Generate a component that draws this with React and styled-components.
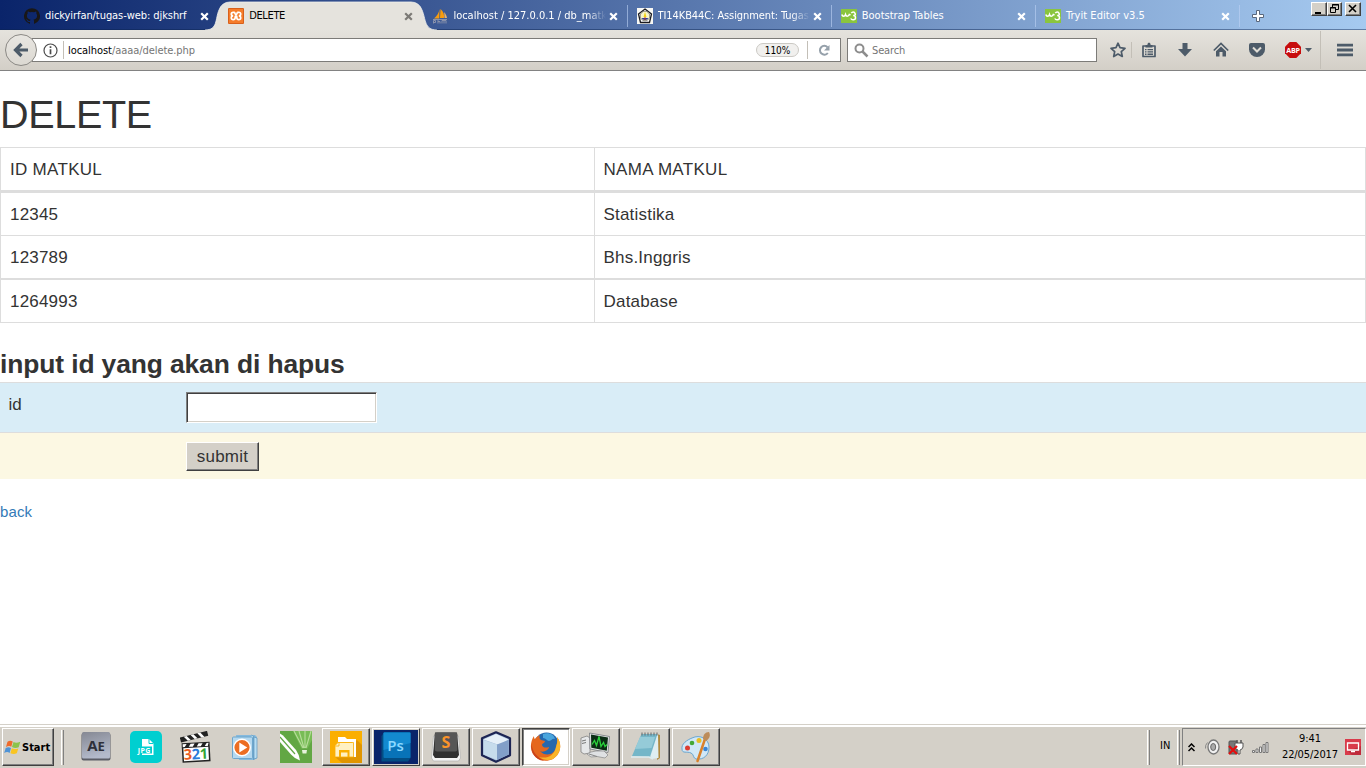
import React from "react";
import styled, { createGlobalStyle, css } from "styled-components";

const GlobalStyle = createGlobalStyle`
  * { box-sizing: border-box; }
  html, body, #root { margin: 0; height: 768px; overflow: hidden; }
  body { background: #fff; }
`;

const uiFont = css`
  font-family: "DejaVu Sans Condensed", "DejaVu Sans", sans-serif;
  font-stretch: condensed;
  font-size: 11px;
`;

const Screen = styled.div`
  display: flex;
  flex-direction: column;
  width: 1366px;
  height: 768px;
  overflow: hidden;
  background: #fff;
`;

/* ---------- browser chrome ---------- */

const TabBar = styled.div`
  flex: none;
  display: flex;
  height: 30px;
  padding-left: 15px;
  background: linear-gradient(to right, #0a246a 0, #a6caf0 100%);
  box-shadow: inset 0 -1px 0 rgba(10, 36, 80, 0.45);
`;

const TabBox = styled.div`
  position: relative;
  flex: none;
  display: flex;
  align-items: center;
  width: 204.2px;
  height: 30px;
  padding: 2px 8px 0 9px;
  ${uiFont}
  color: ${(p) => (p.$active ? "#000" : "#fff")};
  &::after {
    content: "";
    position: absolute;
    right: 0;
    top: 5px;
    width: 1px;
    height: 22px;
    background: ${(p) => (p.$line ? "rgba(190,210,245,0.6)" : "transparent")};
  }
`;

const TabShape = styled.svg`
  position: absolute;
  left: -14px;
  top: 0;
`;

const Favicon = styled.svg`
  position: relative;
  flex: none;
  width: 16px;
  height: 16px;
  margin-right: 5px;
`;

const TabTitle = styled.span`
  position: relative;
  flex: 1;
  min-width: 0;
  white-space: nowrap;
  line-height: 16px;
  letter-spacing: ${(p) => p.$ls || 0}px;
  ${(p) =>
    p.$fade &&
    css`
      mask-image: linear-gradient(to right, #000 88%, transparent 100%);
    `}
`;

const CloseGlyph = styled.svg`
  position: relative;
  flex: none;
  width: 9px;
  height: 9px;
  margin: 0 2px 0 3px;
`;

const NewTab = styled.svg`
  width: 14px;
  height: 14px;
  margin: 9px 0 0 11px;
`;

const WindowButtons = styled.div`
  display: flex;
  margin: 2px 5px 0 auto;
`;

const WindowButton = styled.div`
  width: ${(p) => p.$w || 16}px;
  height: 14px;
  margin-left: ${(p) => p.$ml || 0}px;
  background: #d4d0c8;
  border: 1px solid;
  border-color: #fff #404040 #404040 #fff;
  box-shadow: inset -1px -1px 0 #808080;
  svg { display: block; }
`;

const Toolbar = styled.div`
  flex: none;
  display: flex;
  align-items: center;
  height: 41px;
  padding-left: 5px;
  background: linear-gradient(#e5e3dd, #d3cfc7);
  border-bottom: 1px solid #828282;
`;

const BackButton = styled.div`
  position: relative;
  z-index: 1;
  display: flex;
  align-items: center;
  justify-content: center;
  width: 32px;
  height: 32px;
  border: 1px solid #8b8985;
  border-radius: 50%;
  background: linear-gradient(#e8e6e1, #dcd9d2);
`;

const Field = styled.div`
  display: flex;
  align-items: center;
  width: ${(p) => p.$w}px;
  height: 24px;
  margin-left: ${(p) => p.$ml}px;
  padding-left: ${(p) => p.$pl}px;
  background: #fff;
  border: 1px solid #7c7b78;
  ${uiFont}
  color: #757575;
  svg { flex: none; }
`;

const Address = styled.span`
  flex: 1;
  padding: 1px 0 0 4px;
  line-height: 16px;
  letter-spacing: -0.06px;
  b { font-weight: 400; color: #000; }
`;

const Rule = styled.i`
  flex: none;
  width: 1px;
  height: ${(p) => p.$h}px;
  margin: 0 ${(p) => p.$mr || 0}px 0 ${(p) => p.$ml || 0}px;
  background: #c3bfb7;
`;

const ZoomPill = styled.span`
  width: 43px;
  height: 14px;
  border: 1px solid #cbc9c4;
  border-radius: 7px;
  background: #f1f0ee;
  color: #000;
  font-size: 10px;
  line-height: 13px;
  text-align: center;
  letter-spacing: -0.1px;
`;

const SearchHint = styled.span`
  padding: 1px 0 0 3px;
  line-height: 16px;
  letter-spacing: -0.15px;
`;

const ToolIcon = styled.svg`
  flex: none;
  width: 16px;
  height: 16px;
  margin-left: ${(p) => p.$ml}px;
`;

/* ---------- page ---------- */

const Page = styled.main`
  flex: 1;
  min-height: 0;
  font-family: "Liberation Sans", Arial, sans-serif;
  font-size: 17px;
  color: #333;
`;

const Title = styled.h1`
  margin: 0;
  padding-top: 21px;
  height: 76px;
  font-size: 39.6px;
  font-weight: 400;
  line-height: 44px;
  letter-spacing: -0.35px;
`;

const Courses = styled.div`
  border: 1px solid #ddd;
`;

const CourseRow = styled.div`
  display: grid;
  grid-template-columns: 594px 1fr;
  height: ${(p) => p.$h}px;
  border-bottom: ${(p) => p.$line}px solid #ddd;
`;

const Cell = styled.div`
  padding: 12px 9px 0;
  line-height: 20px;
  letter-spacing: ${(p) => p.$ls || 0.2}px;
  & + & { padding-left: 8.5px; }
  &:first-child { border-right: 1px solid #ddd; }
`;

const FormTitle = styled.h3`
  margin: 0;
  height: 59px;
  padding-top: 26px;
  font-size: 26.4px;
  font-weight: 700;
  line-height: 30px;
  letter-spacing: -0.11px;
`;

const FormRow = styled.div`
  display: grid;
  grid-template-columns: 186px 1fr;
  height: ${(p) => p.$h}px;
  border-top: 1px solid #ddd;
  padding-top: 9px;
  background: ${(p) => p.$bg};
`;

const FormLabel = styled.label`
  padding: 3px 0 0 8.5px;
  line-height: 20px;
`;

const IdInput = styled.input`
  width: 191px;
  height: 31px;
  padding: 1px 4px;
  border: 1px solid;
  border-color: #808080 #fff #fff #808080;
  border-radius: 0;
  box-shadow: inset 1px 1px 0 #404040, inset -1px -1px 0 #d4d0c8;
  background: #fff;
  outline: none;
`;

const Submit = styled.button`
  width: 73px;
  height: 29px;
  padding: 0;
  border: 1px solid;
  border-color: #fff #404040 #404040 #fff;
  box-shadow: inset -1px -1px 0 #808080;
  background: #d4d0c8;
  color: #333;
  font: 17px/25px "Liberation Sans", Arial, sans-serif;
  letter-spacing: 0.25px;
`;

const BackLink = styled.a`
  display: block;
  margin-top: 23px;
  color: #337ab7;
  font-size: 15px;
  line-height: 20px;
  letter-spacing: 0.1px;
`;

/* ---------- taskbar ---------- */

const Taskbar = styled.footer`
  flex: none;
  display: flex;
  height: 44px;
  padding: 1px 0 0 2px;
  background: #d4d0c8;
  border-top: 1px solid #d4d0c8;
  box-shadow: inset 0 2px 0 #fff;
  ${uiFont}
  color: #000;
`;

const raised = css`
  border: 1px solid;
  border-color: #fff #404040 #404040 #fff;
  box-shadow: inset -1px -1px 0 #808080;
`;

const StartButton = styled.div`
  display: flex;
  align-items: center;
  width: 52px;
  height: 38px;
  margin-top: 2px;
  padding-left: 1px;
  font-weight: 700;
  letter-spacing: 0;
  ${raised}
  svg { margin-right: 1px; }
`;

const Grip = styled.i`
  width: 3px;
  height: 35px;
  margin: 4px ${(p) => p.$mr}px 0 ${(p) => p.$ml}px;
  border-left: 1px solid #fff;
  border-right: 1px solid #808080;
`;

const Apps = styled.div`
  display: flex;
  gap: 2px;
  margin-top: 2px;
`;

const AppButton = styled.div`
  display: flex;
  align-items: center;
  justify-content: center;
  width: 48px;
  height: 38px;
  ${(p) => p.$state && raised}
  ${(p) =>
    p.$state === "alert" &&
    css`
      background: #0a246a;
      box-shadow: inset 0 0 0 1px #d4d0c8, inset -1px -1px 0 #808080;
    `}
  ${(p) =>
    p.$state === "down" &&
    css`
      background: #fff;
      border-color: #404040 #fff #fff #404040;
      box-shadow: inset 1px 1px 0 #808080, inset -1px -1px 0 #d4d0c8;
    `}
`;

const Language = styled.span`
  width: 17px;
  padding-top: 13px;
  line-height: 14px;
`;

const Tray = styled.div`
  display: flex;
  align-items: center;
  width: 184px;
  height: 38px;
  margin-top: 2px;
  border: 1px solid;
  border-color: #808080 #fff #fff #808080;
`;

const TrayIcon = styled.svg`
  flex: none;
  margin-left: ${(p) => p.$ml}px;
`;

const Clock = styled.div`
  width: 66px;
  margin-left: 8px;
  line-height: 16px;
  text-align: center;
  letter-spacing: -0.1px;
  white-space: nowrap;
`;

/* ---------- drawings ---------- */

const IconText = styled.text`
  font-family: "Open Sans", sans-serif;
  font-stretch: normal;
  font-weight: ${(p) => p.$weight || 700};
  letter-spacing: ${(p) => p.$ls || 0}px;
`;

const GithubIcon = () => (
  <Favicon viewBox="0 0 16 16">
    <path fill="#191717" d="M8 .2a8 8 0 0 0-2.5 15.6c.4.1.5-.2.5-.4v-1.5c-2.2.5-2.7-1-2.700-1-.4-.9-.9-1.200-.9-1.200-.7-.5.1-.5.1-.5.8.1 1.200.8 1.200.8.7 1.300 1.900.9 2.400.7 0-.5.3-.9.5-1.100-1.800-.2-3.700-.9-3.700-4 0-.9.3-1.600.8-2.100 0-.2-.3-1 .1-2.100 0 0 .7-.2 2.200.8a7.500 7.500 0 0 1 4 0c1.500-1 2.200-.8 2.200-.8.4 1.100.1 1.900.1 2.100.5.5.8 1.200.8 2.100 0 3.100-1.900 3.800-3.700 4 .3.2.6.7.6 1.400v2.400c0 .2.1.5.5.4A8 8 0 0 0 8 .2z" />
  </Favicon>
);
const XamppIcon = () => (
  <Favicon viewBox="0 0 16 16">
    <rect width="16" height="16" rx="1" fill="#d9601a" />
    <rect x="1" y="1" width="14" height="14" fill="#f57c2a" />
    <g fill="none" stroke="#fff" strokeWidth="1.700">
      <path d="M6.800 4.300H5.200Q3.300 4.300 3.300 6.100T5.200 7.900Q3.300 7.900 3.300 9.800T5.200 11.700Q7.200 11.700 7.200 9.500V8.800Q7.200 7.900 8 7.900T8.800 8.800V9.500Q8.800 11.700 10.800 11.700T12.700 9.800 10.800 7.900Q12.700 7.900 12.700 6.100T10.800 4.300H9.200" />
      <path d="M6.800 4.300Q6.900 6.500 8 6.500T9.200 4.300" />
    </g>
  </Favicon>
);
const PmaIcon = () => (
  <Favicon viewBox="0 0 16 16">
    <path d="M7.500 1C7 5 5 8 2 10.500h5.300zM8.500 1c3 2.500 4 6 3.500 9H8z" fill="#f89c0e" />
    <path d="M12.200 4c1.500 1.800 2.500 4 2.800 6h-2.500z" fill="#e9b36c" />
    <path d="M1 11.500h14M1.500 15.500v-3h2v2h-2M6 12v3.500m0-2h2v2M10 15.500v-3h2v3m0-3h2v3" stroke="#8a93ac" strokeWidth="1" fill="none" />
  </Favicon>
);
const CampusIcon = () => (
  <Favicon viewBox="0 0 16 16">
    <rect width="16" height="16" fill="#f8f8f4" />
    <path d="M8 1l6.500 5-2 8.500h-9l-2-8.500z" fill="#fff" stroke="#1b1c20" strokeWidth="1.300" />
    <circle cx="8" cy="8" r="4.800" fill="#f7f6c8" stroke="#444" strokeWidth=".6" />
    <path d="M8 4l1.500 5h-3z" fill="#f2d312" />
    <path d="M4.700 10h6.600c-.8 2.500-5.800 2.500-6.600 0z" fill="#263b9b" />
    <path d="M7.500 9h1v3h-1z" fill="#c13a2e" />
  </Favicon>
);
const W3Icon = () => (
  <Favicon viewBox="0 0 16 16">
    <rect y="1" width="16" height="14" fill="#8ac53e" />
    <path d="M.8 6.500Q1.300 8.200 2.600 8.200T4.500 6.500Q5 8.200 6.300 8.200T8.300 6.500L9.500 7M10.300 5.200Q11 4 12.300 4T14.200 5.700 12.200 7.600Q14.500 7.700 14.500 9.700T12.300 11.800 10.200 10.400" fill="none" stroke="#fff" strokeWidth="1.500" />
  </Favicon>
);

const Close = ({ color }) => (
  <CloseGlyph viewBox="0 0 9 9">
    <path d="M1.200 1.200l6.600 6.600M7.800 1.200L1.200 7.800" stroke={color} strokeWidth="2.200" />
  </CloseGlyph>
);

const slate = "#4d5b69";

const StartFlag = () => (
  <svg width="17" height="15" viewBox="0 0 17 15">
    <path d="M3.500 1.700c2-1.200 3.600-1.100 5.200-.1L7.300 6.700c-1.600-1-3.200-.9-5.300.2z" fill="#ef6a2b" />
    <path d="M9.500 2c1.800 1 3.800 1 6.800-.2l-1.600 5.400c-2.300 1-4.400.9-6.700-.2z" fill="#8cc34b" />
    <path d="M1.700 7.900c2-1 3.600-1 5.300.1l-1.400 4.900c-1.700-1.100-3.400-1-5.400.1z" fill="#4f93d6" />
    <path d="M7.800 8.300c2.100 1 4.200 1 6.500.1l-1.500 4.900c-2.200 1-4.400.9-6.400-.1z" fill="#f9c522" />
  </svg>
);

const Icon32 = ({ children }) => (
  <svg width="32" height="32" viewBox="0 0 32 32">{children}</svg>
);

const AfterEffects = () => (
  <Icon32>
    <defs><linearGradient id="ae" x2="0.300" y2="1"><stop stopColor="#858893" /><stop offset="1" stopColor="#b3bacb" /></linearGradient></defs>
    <rect x="1.500" y="2" width="29" height="27.500" rx="2" fill="#5b5d66" />
    <rect x="2" y="1" width="28" height="26.500" rx="1.500" fill="url(#ae)" />
    <IconText x="16" y="19.500" fontSize="15" textAnchor="middle" fill="#2e3039">A<tspan fontSize="13">E</tspan></IconText>
  </Icon32>
);
const JpgConverter = () => (
  <Icon32>
    <rect width="32" height="32" rx="5" fill="#00cfd0" />
    <path d="M12 8h7l4.500 4.500V24H12z" fill="#fff" />
    <path d="M19 8v4.500h4.500" fill="none" stroke="#00cfd0" />
    <path d="M6 15.500h16v7H6z" fill="#00cfd0" />
    <IconText x="14.200" y="22" fontSize="7" textAnchor="middle" fill="#fff" $ls={0.3}>JPG</IconText>
  </Icon32>
);
const Clapper = () => (
  <Icon32>
    <g transform="rotate(-14 3 11)">
      <rect x="1" y="6" width="28" height="5" fill="#222" />
      <path d="M5 6l3 5h3L8 6zM12 6l3 5h3l-3-5zM19 6l3 5h3l-3-5z" fill="#fff" />
    </g>
    <g transform="rotate(-3 16 20)">
      <rect x="2" y="11.500" width="28" height="19.500" fill="#222" />
      <path d="M3 12.500h4l-2 3H3zM11 12.500h4l-2 3H9zM19 12.500h4l-2 3h-4zM27 12.500h2l-1 3h-3zM3.500 16.500h25v13h-25z" fill="#fff" />
      <IconText x="3.600" y="28.200" fontSize="14.500" fill="#eb5c20" $ls={-0.3}>3<tspan fill="#2b7cdb">2</tspan><tspan fill="#35a536">1</tspan></IconText>
    </g>
  </Icon32>
);
const MediaPlayer = () => (
  <Icon32>
    <path d="M6 4h19l2 2v21l-3 2H9z" fill="#86b9dd" />
    <path d="M24 6l3 1v20l-3 1zM21 4l2.500 1v24" fill="#b8def3" stroke="#5d96bf" strokeWidth=".7" />
    <rect x="2.500" y="6" width="20" height="21.500" rx="1" fill="#b5d8ef" stroke="#6da6cd" />
    <circle cx="12" cy="16.500" r="8.300" fill="#ec6d22" stroke="#fff" strokeWidth="1.400" />
    <path d="M9.300 11.500l8 5-8 5z" fill="#fff" />
  </Icon32>
);
const Corel = () => (
  <Icon32>
    <rect width="32" height="32" fill="#62a744" />
    <path d="M13 0l8.500 17.500h6L32 9V0z" fill="#78bc56" />
    <path d="M14 0l9 17M19 0l5 17M25 0v17M31 0l-5 17" stroke="#b8dd9c" strokeWidth="1.100" />
    <path d="M0 2.500V11l11 12.500Q15 28 20 29.500 19.500 24 16 19L3 4.500z" fill="#fff" />
    <path d="M0 6l15 17" stroke="#62a744" strokeWidth="1.200" />
    <path d="M22 19h5l-.6 3.500h-3.800z" fill="#e6f2dc" />
  </Icon32>
);
const Explorer = () => (
  <Icon32>
    <rect width="32" height="32" fill="#fbaf00" />
    <path d="M27 9l5 5v18H12l-7-6z" fill="#e09500" />
    <path d="M8 6h7l2 2h9v18h-4V11H8z" fill="#fff" />
    <path d="M8 11.500h15.500V26H5V14.500z" fill="#fff1c2" stroke="#fbaf00" strokeWidth=".8" />
    <path d="M5.400 15H9v-3.500" fill="none" stroke="#fbaf00" strokeWidth=".8" />
    <path d="M9 26v-7h10.500v7h-2v-4.500H11V26z" fill="#fbaf00" />
  </Icon32>
);
const Photoshop = () => (
  <Icon32>
    <path d="M1.500 5l3-4H30l.5 26-2.500 3.500H1.500z" fill="#034d83" />
    <rect x="3.500" y="1" width="27" height="26" rx="1" fill="#0873b8" />
    <path d="M3.500 2h27v10l-27 7z" fill="#138ad0" />
    <IconText x="15.500" y="19.500" fontSize="15" textAnchor="middle" fill="#8dd9ff" $weight={600}>Ps</IconText>
  </Icon32>
);
const Sublime = () => (
  <Icon32>
    <path d="M3.500 5h25l2 22-2 3h-25l-2-3z" fill="#f4f4f4" stroke="#aaa" strokeWidth=".6" />
    <path d="M5 1.500h22L29 24l-2 3H5l-2-3z" fill="#303030" />
    <rect x="4.800" y="1.500" width="22.500" height="19" rx="2" fill="#565656" />
    <IconText x="16" y="16.500" fontSize="16" textAnchor="middle" fill="#fb9429">S</IconText>
  </Icon32>
);
const VirtualBox = () => (
  <Icon32>
    <path d="M16 1.300l14 6v17l-14 6.500-14-6.500v-17z" fill="#a5bdd9" stroke="#1d2554" strokeWidth="2.200" strokeLinejoin="round" />
    <path d="M16 3l12.500 5.500L19 14 3.500 8.500z" fill="#e6f0f8" />
    <path d="M3.500 9L17 13.500V29L3.500 23.500z" fill="#c6dcec" />
    <path d="M28.500 9L17 13.500V29l11.500-5.500z" fill="#829fc8" />
  </Icon32>
);
const Firefox = () => (
  <Icon32>
    <circle cx="16.500" cy="14" r="12.500" fill="#2668ad" />
    <path d="M13 3c5-2 11 0 12 5-3-1-3 2-6 2-2 0-3-3-6-3z" fill="#49a5dd" />
    <path d="M27 6c6 8 3 18-4 22C13 33 2 27 1 17 .5 12 2 8 4 5c0 2 .5 3 1 3 1-2 3-3 5-4-1 2-.5 4 1 5l4 1c0 2-3 2.500-3 4 1 3 4 3 7 2 0 3-6 6-9 4 5 6 15 4 16-4 .5-3 2-5 1-10z" fill="#e5671d" />
    <path d="M27 6c6 8 3 18-4 22-5 2-10 1-14-2 8 2 15-1 17-10 .5-3 2-5 1-10z" fill="#f8b52a" />
    <path d="M1.500 13C3 22 7 26 14 29.500 6 30 0 21 1.500 13z" fill="#c9421b" />
  </Icon32>
);
const TaskManager = () => (
  <Icon32>
    <path d="M1 7l6-2 3 2v15l-6 1-3-2z" fill="#e5e7e8" stroke="#777" strokeWidth=".7" />
    <path d="M2 10l4-1M2 12.500l4-1" stroke="#777" />
    <path d="M9.500 2l20 3.500-1.500 16-18-3.500z" fill="#e5e7e8" stroke="#74777c" strokeWidth=".8" />
    <path d="M11 3.500l17 3-1.200 13.200-15.500-3z" fill="#0a2d14" />
    <path d="M12 13.500l2.500-4 2 5 2.500-9 2 10 2.500-4 1.500 4 2-2" fill="none" stroke="#29d13b" strokeWidth="1.300" />
    <path d="M16 20h8l4 4-3 3-8-1.500-6 .5-4-3 4-2z" fill="#dfe1e3" stroke="#888" strokeWidth=".7" />
    <path d="M9 23l8 2.500" stroke="#888" />
  </Icon32>
);
const Notepad = () => (
  <Icon32>
    <path d="M27 3l3 1v23l-3 2z" fill="#ae8a42" />
    <path d="M12 3h16l.5 24-7 1z" fill="#dfeef2" />
    <path d="M11.500 3h16L20 26 2 25z" fill="#74b6c8" />
    <path d="M10 6h15l-3.500 11L5 18z" fill="#95cbd8" />
    <path d="M12 1.500v3M15 1.500v3M18 1.500v3M21 1.500v3M24 1.500v3M27 1.500v3" stroke="#666" strokeWidth="1" />
    <path d="M1 26h18l4 2" stroke="#dcecef" strokeWidth="1.500" fill="none" />
  </Icon32>
);
const Paint = () => (
  <Icon32>
    <path d="M12 7c8-4 17 1 17 9s-5 13-13 12c-3-.5-2-5-5-6-4-2-9 1-9-4C1 13 7 9 12 7z" fill="#d1e8f7" stroke="#6aa6d0" strokeWidth="1" />
    <circle cx="7.500" cy="17" r="2.500" fill="#dd3d31" />
    <circle cx="12" cy="12" r="2.300" fill="#45a836" />
    <circle cx="19" cy="9.500" r="2.500" fill="#e8bf25" />
    <circle cx="25.500" cy="18" r="2.300" fill="#3984d3" />
    <path d="M25 8L17.500 30" stroke="#d9812b" strokeWidth="2.500" strokeLinecap="round" />
    <path d="M23 8c0-4 2-7 6-7 2 4 0 7-3 9z" fill="#bd8c59" />
  </Icon32>
);

/* ---------- data ---------- */

const tabs = [
  { title: "dickyirfan/tugas-web: djkshrf", Icon: GithubIcon, ls: -0.07 },
  { title: "DELETE", Icon: XamppIcon, active: true, ls: -0.35 },
  { title: "localhost / 127.0.0.1 / db_matk", Icon: PmaIcon, line: true, fade: true, ls: 0 },
  { title: "TI14KB44C: Assignment: Tugas", Icon: CampusIcon, line: true, fade: true, ls: -0.09 },
  { title: "Bootstrap Tables", Icon: W3Icon, line: true },
  { title: "Tryit Editor v3.5", Icon: W3Icon, line: true, ls: 0.05 },
];

const rows = [
  { id: "ID MATKUL", name: "NAMA MATKUL", h: 45, line: 3, ls: 0.3 },
  { id: "12345", name: "Statistika", h: 43, line: 1 },
  { id: "123789", name: "Bhs.Inggris", h: 44, line: 2 },
  { id: "1264993", name: "Database", h: 42, line: 0 },
];

const apps = [
  { Icon: AfterEffects }, { Icon: JpgConverter }, { Icon: Clapper }, { Icon: MediaPlayer }, { Icon: Corel },
  { Icon: Explorer, state: "up" }, { Icon: Photoshop, state: "alert" }, { Icon: Sublime, state: "up" },
  { Icon: VirtualBox, state: "up" }, { Icon: Firefox, state: "down" }, { Icon: TaskManager, state: "up" },
  { Icon: Notepad, state: "up" }, { Icon: Paint, state: "up" },
];

const Browser = () => (
  <>
    <TabBar>
      {tabs.map(({ title, Icon, active, line, fade, ls }) => (
        <TabBox key={title} $active={active} $line={line}>
          {active && (
            <TabShape width="232" height="30" viewBox="0 0 232 30">
              <path d="M0 30C13 30 10 19 14 10Q17 2 25 2H206Q214 2 217 10C221 19 219 30 232 30z" fill="#e5e3dd" />
              <path d="M0 30C13 30 10 19 14 10Q17 2 25 2H206Q214 2 217 10C221 19 219 30 232 30" fill="none" stroke="#f3f2ef" strokeWidth=".8" />
            </TabShape>
          )}
          <Icon />
          <TabTitle $fade={fade} $ls={ls}>{title}</TabTitle>
          <Close color={active ? "#7c7a76" : "#fff"} />
        </TabBox>
      ))}
      <NewTab viewBox="0 0 14 14">
        <path d="M5.500 1.500h3v4h4v3h-4v4h-3v-4h-4v-3h4z" fill="#fff" stroke="#59677c" />
      </NewTab>
      <WindowButtons>
        <WindowButton><svg width="14" height="12"><path d="M3 9h6v2H3z" /></svg></WindowButton>
        <WindowButton $w={15}><svg width="13" height="12"><path d="M4.500 4V1.500h6v5H8M4 2h7M2.500 4.500h5v5h-5zM2 5h6" fill="none" stroke="#000" /></svg></WindowButton>
        <WindowButton $ml={3}><svg width="14" height="12"><path d="M3 2l7 7M10 2L3 9" stroke="#000" strokeWidth="1.600" /></svg></WindowButton>
      </WindowButtons>
    </TabBar>
    <Toolbar>
      <BackButton>
        <svg width="16" height="16" viewBox="0 0 16 16"><path d="M8.500 2L2.500 8l6 6M3 8h12" fill="none" stroke={slate} strokeWidth="3.200" /></svg>
      </BackButton>
      <Field $w={809} $ml={-5} $pl={10}>
        <svg width="15" height="15" viewBox="0 0 15 15"><circle cx="7.500" cy="7.500" r="6.500" fill="none" stroke="#4c4c4c" strokeWidth="1.200" /><path d="M7.500 3.200v1.800M7.500 6.300v5" stroke="#4c4c4c" strokeWidth="1.700" /></svg>
        <Rule $h={18} $ml={5} />
        <Address><b>localhost</b>/aaaa/delete.php</Address>
        <ZoomPill>110%</ZoomPill>
        <Rule $h={18} $ml={8} $mr={10} />
        <svg width="22" height="13" viewBox="0 0 22 13"><path d="M9.500 3.200A4.400 4.400 0 1 0 9.800 9" fill="none" stroke="#95a0aa" strokeWidth="2" /><path d="M11.500 1v5.500H6z" fill="#95a0aa" /></svg>
      </Field>
      <Field $w={250} $ml={6} $pl={6}>
        <svg width="15" height="15" viewBox="0 0 15 15"><circle cx="5.500" cy="5.500" r="4" fill="none" stroke="#8d8d8d" strokeWidth="2" /><path d="M8.500 8.500l5 5" stroke="#8d8d8d" strokeWidth="2.500" /></svg>
        <SearchHint>Search</SearchHint>
      </Field>
      <ToolIcon $ml={13} viewBox="0 0 16 16"><path d="M8 1.200l2 4.500 5 .6-3.700 3.300 1 4.900L8 12l-4.300 2.500 1-4.900L1 6.300l5-.6z" fill="none" stroke={slate} strokeWidth="1.700" strokeLinejoin="round" /></ToolIcon>
      <Rule $h={16} $ml={5} />
      <ToolIcon $ml={9} viewBox="0 0 16 16"><path d="M2 4h12v10.500H2z" fill="none" stroke={slate} strokeWidth="1.700" strokeLinejoin="round" /><path d="M4.500 3h1.800q.2-2.500 1.700-2.500T9.700 3h1.800v2.500h-7zM4 7h1.500v1.300H4zM4 9.300h1.500v1.300H4zM4 11.600h1.500v1.300H4zM6.500 7H12v1.300H6.500zM6.500 9.300H12v1.300H6.500zM6.500 11.600H12v1.300H6.500z" fill={slate} /></ToolIcon>
      <ToolIcon $ml={20} viewBox="0 0 16 16"><path d="M5.500 1h5v6H15l-7 7.500L1 7h4.500z" fill={slate} /></ToolIcon>
      <ToolIcon $ml={20} viewBox="0 0 16 16"><path d="M.8 8.500L8 1.500l7.200 7" fill="none" stroke={slate} strokeWidth="1.700" /><path d="M3 9.300l5-4.800 5 4.800v5.200H9.500V10h-3v4.500H3z" fill={slate} /></ToolIcon>
      <ToolIcon $ml={20} viewBox="0 0 16 16"><path d="M0 3q0-2 2-2h12q2 0 2 2v4.500a8 7.500 0 0 1-16 0z" fill={slate} /><path d="M4 5.500l4 4 4-4" fill="none" stroke="#e0ddd6" strokeWidth="2" /></ToolIcon>
      <ToolIcon $ml={20} viewBox="0 0 16 16"><path d="M4.700 0h6.600L16 4.700v6.600L11.300 16H4.700L0 11.300V4.700z" fill="#c70d0d" /><IconText x="8" y="10.800" fontSize="7.200" textAnchor="middle" fill="#fff" $ls={-0.2}>ABP</IconText></ToolIcon>
      <ToolIcon as="svg" $ml={4} viewBox="0 0 16 16"><path d="M0 6h7L3.500 10z" fill={slate} /></ToolIcon>
      <Rule $h={38} $ml={-1} />
      <ToolIcon $ml={16} viewBox="0 0 16 16"><path d="M0 3.200h16M0 8h16M0 12.800h16" stroke={slate} strokeWidth="2.800" /></ToolIcon>
    </Toolbar>
  </>
);

export default function App() {
  return (
    <Screen>
      <GlobalStyle />
      <Browser />
      <Page>
        <Title>DELETE</Title>
        <Courses>
          {rows.map((r) => (
            <CourseRow key={r.id} $h={r.h} $line={r.line}>
              <Cell $ls={r.ls}>{r.id}</Cell>
              <Cell $ls={r.ls}>{r.name}</Cell>
            </CourseRow>
          ))}
        </Courses>
        <FormTitle>input id yang akan di hapus</FormTitle>
        <FormRow $h={50} $bg="#d9edf7">
          <FormLabel htmlFor="course-id">id</FormLabel>
          <IdInput id="course-id" />
        </FormRow>
        <FormRow $h={47} $bg="#fcf8e3">
          <span />
          <Submit>submit</Submit>
        </FormRow>
        <BackLink>back</BackLink>
      </Page>
      <Taskbar>
        <StartButton><StartFlag />Start</StartButton>
        <Grip $ml={7} $mr={8} />
        <Apps>
          {apps.map(({ Icon, state }, i) => (
            <AppButton key={i} $state={state}><Icon /></AppButton>
          ))}
        </Apps>
        <Grip $ml={427} $mr={10} />
        <Language>IN</Language>
        <Grip $ml={0} $mr={2} />
        <Tray>
          <TrayIcon $ml={5} width="7" height="9" viewBox="0 0 7 9"><path d="M.5 4l3-3 3 3M.5 8l3-3 3 3" fill="none" stroke="#000" strokeWidth="1.500" /></TrayIcon>
          <TrayIcon $ml={9} width="16" height="16" viewBox="0 0 16 16"><ellipse cx="9.500" cy="8" rx="5.500" ry="7" fill="#f1f1f1" stroke="#777" strokeWidth="1.300" /><ellipse cx="9.200" cy="8" rx="2.500" ry="3.500" fill="#aaa" stroke="#666" /><path d="M3.500 3.500Q1 6 1.500 9.500" fill="none" stroke="#888" /></TrayIcon>
          <TrayIcon $ml={8} width="16" height="16" viewBox="0 0 16 16"><rect x="1" y="2" width="8" height="13" rx="1" fill="#777" stroke="#555" /><path d="M9 1v3M13 1v3" stroke="#555" strokeWidth="1.500" /><path d="M7 4h8v4q-1 3-3 3v4h-2v-4q-3-1-3-3z" fill="#fff" stroke="#555" /><path d="M1 7l8 8M9 7l-8 8" stroke="#e50d0d" strokeWidth="2.200" /></TrayIcon>
          <TrayIcon $ml={8} width="17" height="14" viewBox="0 0 17 14"><path d="M.5 10.500h2v2h-2zM4 9h2v3.500H4zM7.500 7h2v5.500h-2zM11 4.500h2v8h-2zM14 2.500h2v10h-2z" fill="#eee" stroke="#777" /></TrayIcon>
          <Clock>9:41<br />22/05/2017</Clock>
          <TrayIcon $ml={2} width="16" height="16" viewBox="0 0 16 16"><rect width="16" height="16" fill="#d93b4b" /><path d="M16 7v9H7l-4-4z" fill="#bf2b3b" /><path d="M2.500 4h11v7h-11z" fill="none" stroke="#fff" strokeWidth="1.300" /><path d="M6 12.500h4" stroke="#fff" strokeWidth="1.500" /></TrayIcon>
        </Tray>
      </Taskbar>
    </Screen>
  );
}
